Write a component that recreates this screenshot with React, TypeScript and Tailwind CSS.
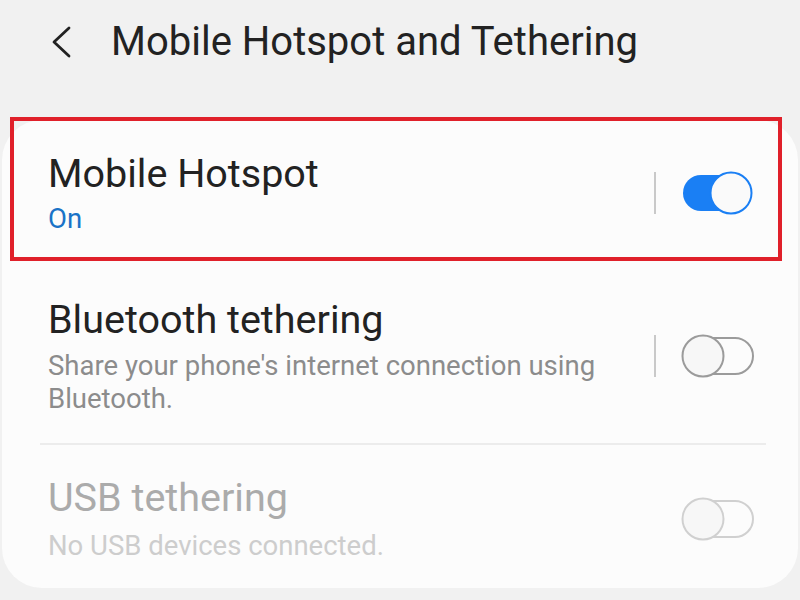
import React from "react";

type ToggleState = "on" | "off" | "disabled";

function Toggle({ state }: { state: ToggleState }) {
  if (state === "on") {
    return (
      <svg width="74" height="46" viewBox="0 0 74 46" aria-hidden>
        <rect x="2" y="5" width="66" height="36" rx="18" fill="#1a7ff4" />
        <circle cx="50" cy="23" r="20.5" fill="#fafafa" stroke="#1a7ff4" strokeWidth="2" />
      </svg>
    );
  }
  const color = state === "off" ? "#9b9b9b" : "#d0d0d0";
  return (
    <svg width="74" height="46" viewBox="0 0 74 46" aria-hidden>
      <rect x="6" y="5" width="66" height="36" rx="18" fill="none" stroke={color} strokeWidth="2" />
      <circle cx="22" cy="23" r="20.5" fill="#f7f7f7" stroke={color} strokeWidth="2" />
    </svg>
  );
}

function Row({
  title,
  subtitle,
  state,
  divider,
  titleClass,
  subClass,
  subGap,
}: {
  title: string;
  subtitle: React.ReactNode;
  state: ToggleState;
  divider?: boolean;
  titleClass: string;
  subClass: string;
  subGap: string;
}) {
  return (
    <div className="flex items-center pl-[46px] pr-[43px]">
      <div className="flex-1">
        <div className={`text-[39.5px] leading-[46px] ${titleClass}`}>{title}</div>
        <div className={`text-[27.5px] leading-[33px] ${subGap} ${subClass}`}>{subtitle}</div>
      </div>
      <div className="flex items-center">
        {divider ? <div className="mr-[25px] h-[42px] w-[2px] bg-[#c9c9c9]" /> : <div className="w-[27px]" />}
        <Toggle state={state} />
      </div>
    </div>
  );
}

export default function App() {
  return (
    <div
      className="relative h-[600px] w-[800px] overflow-hidden bg-[#f1f1f1]"
      style={{ fontFamily: "Roboto, 'Noto Sans', sans-serif" }}
    >
      <div className="flex h-[120px] items-start pt-[19px]">
        <svg width="24" height="32" viewBox="0 0 24 32" className="ml-[49px] mt-[7px]" aria-hidden>
          <path d="M20 2 L5 16 L20 30" fill="none" stroke="#222" strokeWidth="2.8" strokeLinecap="round" strokeLinejoin="round" />
        </svg>
        <h1 className="ml-[38px] text-[40px] leading-[46px] font-normal text-[#222]">Mobile Hotspot and Tethering</h1>
      </div>

      <div className="mx-[2px] rounded-[40px] bg-[#fcfcfc] pt-[31px] pb-[26px]">
        <Row
          title="Mobile Hotspot"
          subtitle="On"
          state="on"
          divider
          titleClass="text-[#222]"
          subClass="text-[#1a73c7]"
          subGap="mt-[5px]"
        />
        <div className="h-[62px]" />
        <Row
          title="Bluetooth tethering"
          subtitle={
            <>
              Share your phone's internet connection using
              <br />
              Bluetooth.
            </>
          }
          state="off"
          divider
          titleClass="text-[#222]"
          subClass="text-[#8c8c8c]"
          subGap="mt-[6px]"
        />
        <div className="ml-[38px] mr-[32px] mt-[28px] h-[2px] bg-[#ececec]" />
        <div className="h-[30px]" />
        <Row
          title="USB tethering"
          subtitle="No USB devices connected."
          state="disabled"
          titleClass="text-[#ababab]"
          subClass="text-[#cdcdcd]"
          subGap="mt-[8px]"
        />
      </div>

      <div className="pointer-events-none absolute left-[10px] top-[117px] h-[144px] w-[772px] border-[4px] border-[#e0202a]" />
    </div>
  );
}
